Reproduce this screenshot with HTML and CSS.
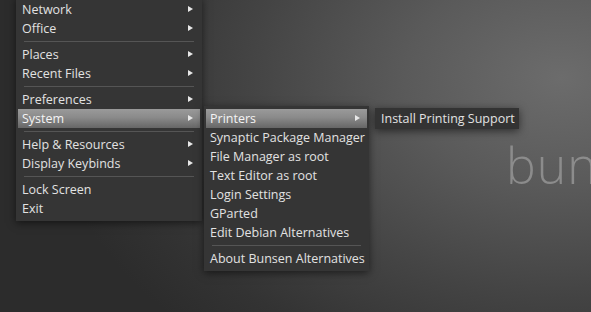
FILE: index.html
```html
<!DOCTYPE html>
<html lang="en">
<head>
    <meta charset="UTF-8">
    <title>Openbox menu</title>
    <link rel="stylesheet" href="styles.css">
</head>
<body>
    <div class="desktop">
        <div class="wallpaper-text">bun</div>

        <!-- root menu -->
        <div class="menu menu-root">
            <div class="item sub">Network</div>
            <div class="item sub">Office</div>
            <div class="sep"></div>
            <div class="item sub">Places</div>
            <div class="item sub">Recent Files</div>
            <div class="sep"></div>
            <div class="item sub">Preferences</div>
            <div class="item sub active">System</div>
            <div class="sep"></div>
            <div class="item sub">Help &amp; Resources</div>
            <div class="item sub">Display Keybinds</div>
            <div class="sep"></div>
            <div class="item">Lock Screen</div>
            <div class="item">Exit</div>
        </div>

        <!-- System submenu -->
        <div class="menu menu-system">
            <div class="item sub active">Printers</div>
            <div class="item">Synaptic Package Manager</div>
            <div class="item">File Manager as root</div>
            <div class="item">Text Editor as root</div>
            <div class="item">Login Settings</div>
            <div class="item">GParted</div>
            <div class="item">Edit Debian Alternatives</div>
            <div class="sep"></div>
            <div class="item">About Bunsen Alternatives</div>
        </div>

        <!-- Printers submenu -->
        <div class="menu menu-printers">
            <div class="item">Install Printing Support</div>
        </div>
    </div>
</body>
</html>
```

FILE: styles.css
```css
html, body {
    margin: 0;
    padding: 0;
}
body {
    font-family: "Open Sans", "Noto Sans", sans-serif;
    font-size: 12.5px;
    color: #e2e2e2;
}
.desktop {
    position: relative;
    width: 591px;
    height: 312px;
    overflow: hidden;
    background: radial-gradient(ellipse 520px 360px at 95% 25%, #6c6c6c 0%, #5a5a5a 30%, #444 60%, #333 85%, #2c2c2c 100%);
}
.wallpaper-text {
    position: absolute;
    left: 506px;
    top: 135px;
    font-family: "Open Sans", sans-serif;
    font-weight: 300;
    font-size: 50px;
    line-height: 60px;
    color: #8c8c8c;
    letter-spacing: 1px;
}
.menu {
    position: absolute;
    background: #353535;
    padding: 3px 0;
    box-shadow: 0 2px 8px rgba(0,0,0,0.55);
}
.menu-root {
    left: 16px;
    top: -3px;
    width: 186px;
}
.menu-system {
    left: 204px;
    top: 106px;
    width: 165px;
}
.menu-printers {
    left: 375px;
    top: 108px;
    width: 144px;
    padding: 1px 0;
    background: #333;
}
.item {
    position: relative;
    height: 19px;
    line-height: 19px;
    margin: 0 2px;
    padding: 0 4px;
    white-space: nowrap;
}
.item.active {
    background: linear-gradient(#9a9a9a, #8a8a8a 45%, #666);
    color: #f4f4f4;
}
.item.sub::after {
    content: "";
    position: absolute;
    right: 7px;
    top: 6px;
    border-left: 5px solid #e8e8e8;
    border-top: 3.5px solid transparent;
    border-bottom: 3.5px solid transparent;
}
.sep {
    height: 1px;
    margin: 3px 8px;
    background: #555;
}
```
